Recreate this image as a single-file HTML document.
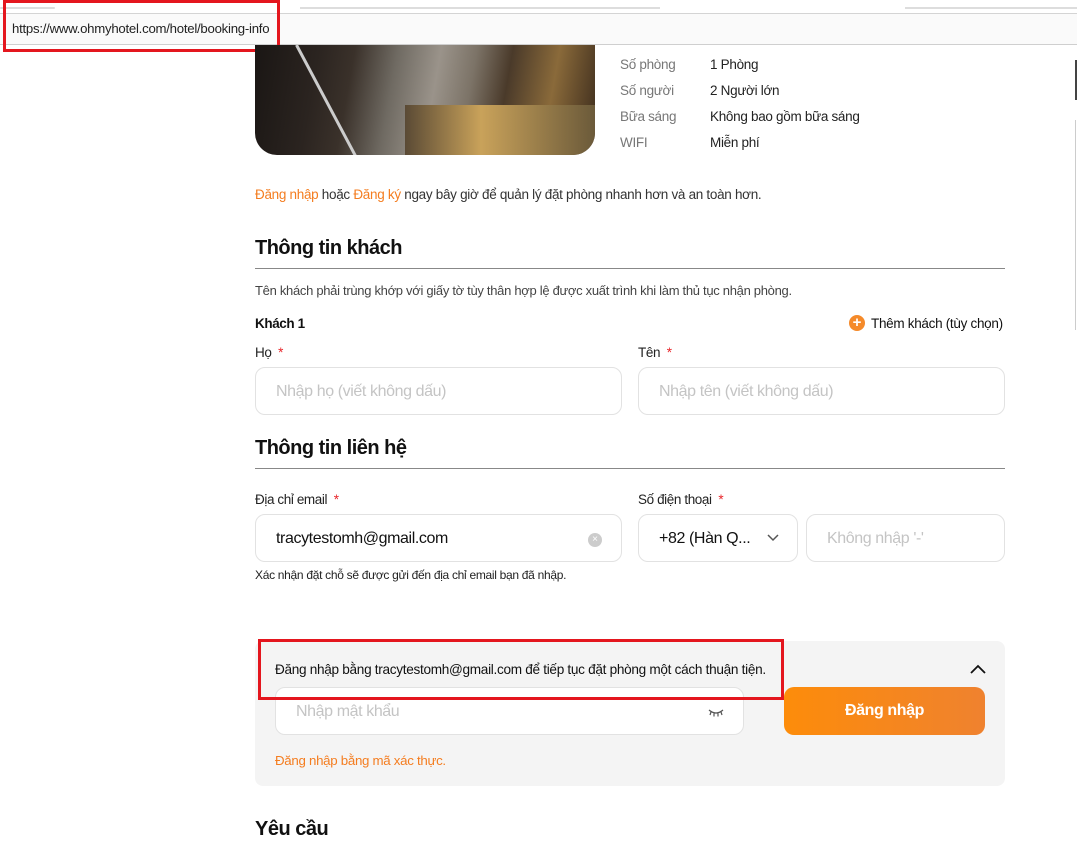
<!DOCTYPE html>
<html><head><meta charset="utf-8"><style>
*{margin:0;padding:0;box-sizing:border-box}
body{width:1077px;height:827px;overflow:hidden;background:#fff;font-family:"Liberation Sans",sans-serif;color:#111;position:relative}
.a{position:absolute;white-space:nowrap}
.inp{position:absolute;border:1px solid #e2e2e2;border-radius:10px;background:#fff}
.ph{color:#c4c4c4;font-size:16px;letter-spacing:-0.4px}
.lbl{font-size:13.5px;letter-spacing:-0.4px;color:#222}
.star{color:#e8262b}
.h2{font-size:20px;font-weight:bold;letter-spacing:-0.5px}
.hr{position:absolute;height:1px;background:#888}
.g{color:#777;font-size:13.5px;letter-spacing:-0.3px}
.v{color:#222;font-size:13.5px;letter-spacing:-0.3px}
</style></head><body>
<div class="a" style="left:0;top:0;width:1077px;height:13px;background:#fff"></div>
<div class="a" style="left:0;top:7px;width:55px;height:2px;background:#ddd;border-radius:2px"></div>
<div class="a" style="left:300px;top:7px;width:360px;height:2px;background:#ddd"></div>
<div class="a" style="left:905px;top:7px;width:172px;height:2px;background:#ddd"></div>
<div class="a" style="left:0;top:13px;width:1077px;height:32px;background:#fafafa;border-top:1px solid #d4d4d4;border-bottom:1px solid #cfcfcf"></div>
<div class="a" style="left:3px;top:0;width:277px;height:52px;border:3px solid #e4161e"></div>
<div class="a" style="left:12px;top:21px;font-size:13.2px;color:#222;letter-spacing:-0.25px">https://www.ohmyhotel.com/hotel/booking-info</div>
<div class="a" style="left:1075px;top:60px;width:2px;height:40px;background:#444"></div>
<div class="a" style="left:1075px;top:120px;width:1px;height:210px;background:#ccc"></div>
<div class="a" style="left:255px;top:45px;width:340px;height:110px;border-radius:0 0 22px 22px;overflow:hidden;background:linear-gradient(100deg,#1a1614 0%,#2b2420 18%,#3a312a 28%,#6f6a62 40%,#9a938a 52%,#7c7367 62%,#4a3a2a 72%,#8a6a3a 85%,#3a2a1c 100%)">
<div style="position:absolute;left:40px;top:0;width:3px;height:130px;background:#ccc;transform:rotate(-28deg);transform-origin:top"></div>
<div style="position:absolute;left:150px;top:60px;width:190px;height:50px;background:linear-gradient(90deg,#5a4a35,#c9a25a 40%,#6b5a3a)"></div>
</div>
<div class="a g" style="left:620px;top:57px">Số phòng</div><div class="a v" style="left:710px;top:57px">1 Phòng</div>
<div class="a g" style="left:620px;top:83px">Số người</div><div class="a v" style="left:710px;top:83px">2 Người lớn</div>
<div class="a g" style="left:620px;top:109px">Bữa sáng</div><div class="a v" style="left:710px;top:109px">Không bao gồm bữa sáng</div>
<div class="a g" style="left:620px;top:135px">WIFI</div><div class="a v" style="left:710px;top:135px">Miễn phí</div>
<div class="a" style="left:255px;top:187px;font-size:13.5px;letter-spacing:-0.3px;color:#333"><span style="color:#f47d20">Đăng nhập</span> hoặc <span style="color:#f47d20">Đăng ký</span> ngay bây giờ để quản lý đặt phòng nhanh hơn và an toàn hơn.</div>
<div class="a h2" style="left:255px;top:237px">Thông tin khách</div>
<div class="hr" style="left:255px;top:268px;width:750px"></div>
<div class="a" style="left:255px;top:283px;font-size:13px;letter-spacing:-0.3px;color:#444">Tên khách phải trùng khớp với giấy tờ tùy thân hợp lệ được xuất trình khi làm thủ tục nhận phòng.</div>
<div class="a" style="left:255px;top:316px;font-size:13.5px;font-weight:bold;letter-spacing:-0.4px">Khách 1</div>
<div class="a" style="left:849px;top:315px;width:16px;height:16px;border-radius:50%;background:#f58a2a;color:#fff;font-size:15px;line-height:15px;text-align:center;font-weight:bold">+</div>
<div class="a" style="left:871px;top:316px;font-size:13.5px;letter-spacing:-0.3px">Thêm khách (tùy chọn)</div>
<div class="a lbl" style="left:255px;top:345px">Họ &nbsp;<span class="star">*</span></div>
<div class="a lbl" style="left:638px;top:345px">Tên &nbsp;<span class="star">*</span></div>
<div class="inp" style="left:255px;top:367px;width:367px;height:48px"><div class="a ph" style="left:20px;top:15px">Nhập họ (viết không dấu)</div></div>
<div class="inp" style="left:638px;top:367px;width:367px;height:48px"><div class="a ph" style="left:20px;top:15px">Nhập tên (viết không dấu)</div></div>
<div class="a h2" style="left:255px;top:437px">Thông tin liên hệ</div>
<div class="hr" style="left:255px;top:468px;width:750px"></div>
<div class="a lbl" style="left:255px;top:492px">Địa chỉ email &nbsp;<span class="star">*</span></div>
<div class="a lbl" style="left:638px;top:492px">Số điện thoại &nbsp;<span class="star">*</span></div>
<div class="inp" style="left:255px;top:514px;width:367px;height:48px"><div class="a" style="left:20px;top:15px;font-size:16px;letter-spacing:-0.4px">tracytestomh@gmail.com</div>
<div class="a" style="left:332px;top:18px;width:14px;height:14px;border-radius:50%;background:#ccc;color:#fff;font-size:10px;line-height:14px;text-align:center">×</div></div>
<div class="inp" style="left:638px;top:514px;width:160px;height:48px"><div class="a" style="left:20px;top:15px;font-size:16px;letter-spacing:-0.4px">+82 (Hàn Q...</div>
<svg class="a" style="left:128px;top:19px" width="12" height="8"><path d="M1 1l5 5 5-5" stroke="#555" stroke-width="1.5" fill="none"/></svg></div>
<div class="inp" style="left:806px;top:514px;width:199px;height:48px"><div class="a ph" style="left:20px;top:15px">Không nhập '-'</div></div>
<div class="a" style="left:255px;top:568px;font-size:12px;letter-spacing:-0.3px;color:#222">Xác nhận đặt chỗ sẽ được gửi đến địa chỉ email bạn đã nhập.</div>
<div class="a" style="left:255px;top:641px;width:750px;height:145px;background:#f4f4f4;border-radius:8px"></div>
<div class="a" style="left:275px;top:662px;font-size:13.6px;letter-spacing:-0.3px;color:#111">Đăng nhập bằng tracytestomh@gmail.com để tiếp tục đặt phòng một cách thuận tiện.</div>
<svg class="a" style="left:970px;top:664px" width="16" height="10"><path d="M1 9l7-7 7 7" stroke="#111" stroke-width="1.8" fill="none"/></svg>
<div class="inp" style="left:275px;top:687px;width:469px;height:48px"><div class="a ph" style="left:20px;top:15px">Nhập mật khẩu</div>
<svg class="a" style="left:432px;top:20px" width="16" height="10"><path d="M1 2q7 6 14 0M3 4l-1 3M6 5.5v3M10 5.5v3M13 4l1 3" stroke="#555" stroke-width="1.2" fill="none"/></svg></div>
<div class="a" style="left:784px;top:687px;width:201px;height:48px;border-radius:10px;background:linear-gradient(90deg,#fd8c0a,#ef822f);color:#fff;font-size:16px;font-weight:bold;text-align:center;line-height:48px;letter-spacing:-0.4px">Đăng nhập</div>
<div class="a" style="left:275px;top:753px;font-size:13.3px;letter-spacing:-0.3px;color:#f47d20">Đăng nhập bằng mã xác thực.</div>
<div class="a" style="left:258px;top:639px;width:526px;height:61px;border:3px solid #e4161e"></div>
<div class="a h2" style="left:255px;top:818px">Yêu cầu</div>
</body></html>
